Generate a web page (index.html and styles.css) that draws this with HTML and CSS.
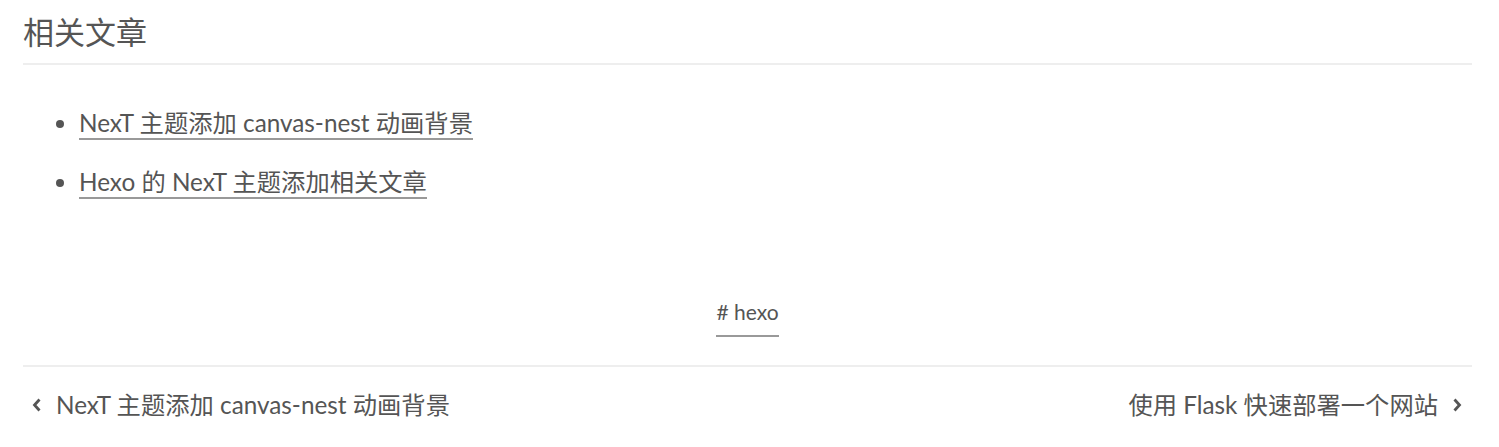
FILE: index.html
```html
<!DOCTYPE html>
<html lang="zh-CN">
<head>
<meta charset="utf-8">
<title>相关文章</title>
<link rel="stylesheet" href="styles.css">
</head>
<body>
<div class="page">
  <h2 class="related-title">相关文章</h2>
  <ul class="related-list">
    <li><a href="#">NexT 主题添加 canvas-nest 动画背景</a></li>
    <li><a href="#">Hexo 的 NexT 主题添加相关文章</a></li>
  </ul>
  <div class="tags"><a href="#"># hexo</a></div>
  <nav class="post-nav">
    <a class="prev" href="#">
      <svg class="chev" viewBox="0 0 10 16" width="10" height="16"><path d="M7.5 2.5 L2.5 8 L7.5 13.5" fill="none" stroke="#555" stroke-width="2.8" stroke-linecap="butt" stroke-linejoin="miter"/></svg>
      <span>NexT 主题添加 canvas-nest 动画背景</span>
    </a>
    <a class="next" href="#">
      <span>使用 Flask 快速部署一个网站</span>
      <svg class="chev" viewBox="0 0 10 16" width="10" height="16"><path d="M2.5 2.5 L7.5 8 L2.5 13.5" fill="none" stroke="#555" stroke-width="2.8" stroke-linecap="butt" stroke-linejoin="miter"/></svg>
    </a>
  </nav>
</div>
</body>
</html>
```
FILE: styles.css
```css
html, body {
  margin: 0;
  padding: 0;
  background: #fff;
}
body {
  font-family: Lato, "Noto Sans CJK SC", sans-serif;
  color: #555;
}
.page {
  padding: 0 27px 0 23px;
}
.related-title {
  margin: 0;
  padding-top: 12px;
  font-size: 31px;
  font-weight: 400;
  line-height: 40px;
  padding-bottom: 11px;
  border-bottom: 2px solid #eee;
}
.related-list {
  margin: 0;
  padding: 41px 0 0 56px;
  list-style: disc;
  font-size: 24.3px;
  line-height: 34px;
}
.related-list li {
  margin-bottom: 25px;
}
.related-list a {
  color: #555;
  text-decoration: none;
  border-bottom: 2px solid #999;
  padding-bottom: 1px;
}
.tags {
  text-align: center;
  padding-top: 75px;
  padding-bottom: 28px;
  font-size: 21px;
  line-height: 26px;
  border-bottom: 2px solid #eee;
}
.tags a {
  color: #555;
  text-decoration: none;
  display: inline-block;
  padding-bottom: 10px;
  border-bottom: 2px solid #999;
}
.post-nav {
  display: flex;
  justify-content: space-between;
  align-items: center;
  padding-top: 22px;
  font-size: 24.3px;
  line-height: 32px;
}
.post-nav a {
  color: #555;
  text-decoration: none;
  display: flex;
  align-items: center;
  gap: 14px;
}
.post-nav .prev {
  padding-left: 9px;
}
.post-nav .next {
  padding-right: 10px;
}
.chev {
  display: block;
}
```
